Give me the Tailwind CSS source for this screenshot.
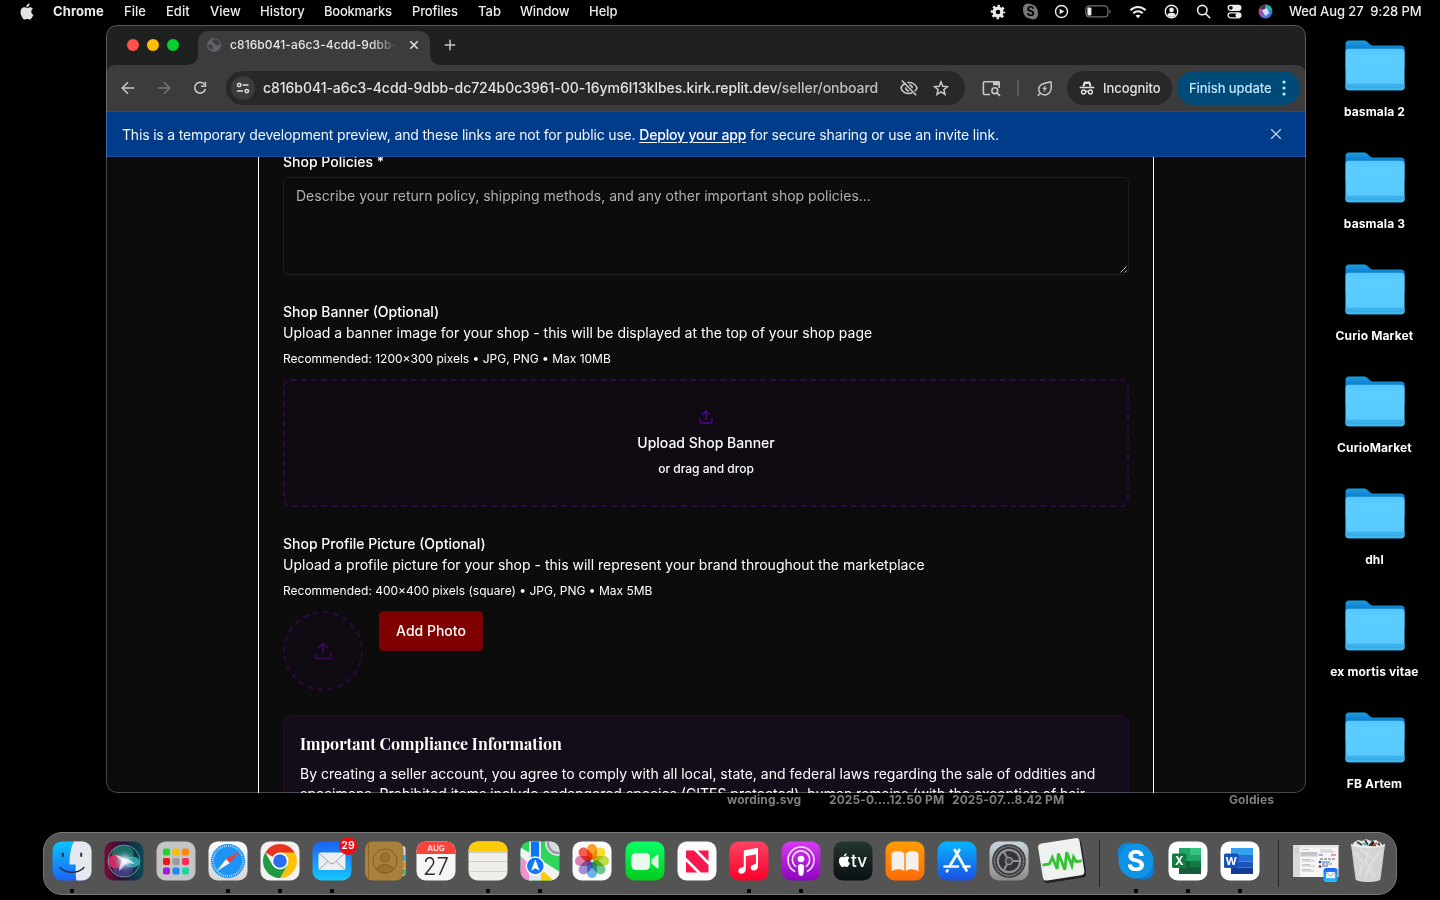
<!DOCTYPE html>
<html lang="en">
<head>
<meta charset="utf-8">
<title>Desktop</title>
<script src="https://cdn.jsdelivr.net/npm/@tailwindcss/browser@4"></script>
</head>
<body class="bg-black">
<div class="relative w-[1440px] h-[900px] overflow-hidden bg-black font-['Inter',sans-serif] text-white">

<!-- Menu bar -->
<header class="flex h-[25px] items-center text-[13px] leading-none font-medium text-[#ececec] whitespace-nowrap pb-[2px]">
  <svg class="ml-[20px] mr-[19px] shrink-0" width="14" height="17" viewBox="0 0 14 17" fill="#e4e4e4"><path d="M9.600 0.300c.1 1-.3 2-.9 2.700-.6.8-1.500 1.300-2.300 1.200-.1-1 .4-2 .9-2.600C7.900.9 8.900.4 9.600.3zM12.900 5.800c-.8.5-1.700 1.400-1.600 2.900 0 1.800 1.200 2.700 2.100 3.100-.4 1.200-1 2.300-1.700 3.300-.6.9-1.200 1.500-2.100 1.500s-1.300-.6-2.400-.6c-1.100 0-1.500.6-2.400.6s-1.600-.8-2.200-1.700C1.100 12.800.5 10.800.5 9c0-3 1.900-4.700 3.800-4.700 1.100 0 2 .7 2.700.7.600 0 1.700-.8 3-.8 1.200 0 2.300.6 2.900 1.600z"/></svg>
  <span class="w-[71px] font-bold tracking-[0.1px]">Chrome</span>
  <span class="w-[42px]">File</span>
  <span class="w-[44px]">Edit</span>
  <span class="w-[50px]">View</span>
  <span class="w-[64px]">History</span>
  <span class="w-[88px] tracking-[-0.25px]">Bookmarks</span>
  <span class="w-[66px] tracking-[-0.15px]">Profiles</span>
  <span class="w-[42px]">Tab</span>
  <span class="w-[69px] tracking-[-0.2px]">Window</span>
  <span class="w-[28px]">Help</span>
  <div class="ml-auto flex items-center mr-[19px]">
    <svg class="mr-[16px]" width="16" height="16" viewBox="0 0 16 16"><circle cx="8" cy="8" r="3.900" fill="none" stroke="#ececec" stroke-width="3.200"/><circle cx="8" cy="8" r="6.100" fill="none" stroke="#ececec" stroke-width="2.400" stroke-dasharray="2.395 2.395" stroke-dashoffset="1.200"/></svg>
    <svg class="mr-[15px]" width="17" height="17" viewBox="0 0 17 17"><rect x="1" y=".5" width="10" height="11" rx="5" fill="#777"/><rect x="6" y="5.500" width="10" height="11" rx="5" fill="#777"/><circle cx="8.500" cy="8.500" r="7.200" fill="#777"/><text x="8.500" y="13" font-size="12.500" font-weight="700" text-anchor="middle" fill="#000">S</text></svg>
    <svg class="mr-[16px]" width="15" height="15" viewBox="0 0 15 15"><circle cx="7.500" cy="7.500" r="6" fill="none" stroke="#ececec" stroke-width="1.400"/><path d="M5.600 4.700v5.600l4.700-2.800z" fill="#ececec"/></svg>
    <svg class="mr-[17px]" width="27" height="13" viewBox="0 0 27 13"><rect x=".9" y=".9" width="22" height="11" rx="3" fill="none" stroke="#8a8a8a"/><rect x="2.400" y="2.400" width="4" height="8" rx="1" fill="#f0f0f0"/><path d="M24.500 4.500v4c1.300-.3 1.300-3.700 0-4z" fill="#8a8a8a"/></svg>
    <svg class="mr-[17px]" width="18" height="14" viewBox="0 0 18 14" fill="none" stroke="#f0f0f0" stroke-width="2"><path d="M1.500 5.200c4.200-4.300 10.800-4.300 15 0M4.300 8.200c2.700-2.700 6.700-2.700 9.400 0"/><path d="M6.500 10.600c1.500-1.300 3.500-1.300 5 0L9 13.200z" fill="#f0f0f0" stroke="none"/></svg>
    <svg class="mr-[17px]" width="15" height="15" viewBox="0 0 15 15"><circle cx="7.500" cy="7.500" r="6.200" fill="none" stroke="#ececec" stroke-width="1.400"/><circle cx="7.500" cy="5.900" r="2.300" fill="#ececec"/><path d="M3.200 11.300c.6-3.300 8-3.300 8.600 0-2 2.300-6.600 2.300-8.600 0z" fill="#ececec"/></svg>
    <svg class="mr-[16px]" width="15" height="15" viewBox="0 0 15 15" fill="none" stroke="#ececec" stroke-width="1.600" stroke-linecap="round"><circle cx="6.300" cy="6.100" r="4.700"/><path d="M9.800 9.700l3.900 4"/></svg>
    <svg class="mr-[16px]" width="15" height="15" viewBox="0 0 15 15"><rect x=".5" y=".7" width="14" height="6.200" rx="3.100" fill="#ececec"/><circle cx="3.800" cy="3.800" r="1.900" fill="#000"/><rect x="1.100" y="8.800" width="12.800" height="5" rx="2.500" fill="none" stroke="#ececec" stroke-width="1.300"/><circle cx="11" cy="11.300" r="2.500" fill="#ececec"/></svg>
    <svg class="mr-[16px]" width="15" height="15" viewBox="0 0 15 15"><defs><linearGradient id="siri" x1="0" y1="0.300" x2="1" y2="0.600"><stop offset="0" stop-color="#e8336f"/><stop offset=".5" stop-color="#5b6fe0"/><stop offset="1" stop-color="#1d7fd6"/></linearGradient></defs><circle cx="7.500" cy="7.500" r="6.900" fill="url(#siri)"/><path d="M7.500.6a6.900 6.900 0 0 1 6.700 6L7 6z" fill="#27b7a0"/><path d="M1.500 4.500C3 2 5 .6 7.500.6L7 6z" fill="#52305f"/><path d="M4 6.500l4.500-2.500 3 5-4 3z" fill="#fff" opacity=".75"/></svg>
    <span class="w-[132px] whitespace-pre tracking-[-0.1px]">Wed Aug 27  9:28 PM</span>
  </div>
</header>

<!-- Desktop folders -->
<svg width="0" height="0" class="absolute"><defs>
  <linearGradient id="fback" x1="0" y1="0" x2="0" y2="1"><stop offset="0" stop-color="#1a9fe0"/><stop offset=".3" stop-color="#0a7fd0"/></linearGradient>
  <linearGradient id="ffront" x1="0" y1="0" x2="0" y2="1"><stop offset="0" stop-color="#56c6fb"/><stop offset=".15" stop-color="#5ccdff"/><stop offset="1" stop-color="#57caff"/></linearGradient>
  <symbol id="folder" viewBox="0 0 60 51"><path d="M.5 4A3.500 3.500 0 0 1 4 .500h14.500c2 0 3 .6 4.200 1.700l2.200 2c1 .9 2 1.300 3.300 1.300H56a3.500 3.500 0 0 1 3.500 3.500v20H.5z" fill="url(#fback)"/><rect x=".5" y="8.800" width="59" height="41.500" rx="3" fill="url(#ffront)"/><path d="M.5 44.500h59v2.800a3 3 0 0 1-3 3h-53a3 3 0 0 1-3-3z" fill="#3cb6ee"/><path d="M.5 44.300h59M1 47h58" stroke="#2da3dc" stroke-width=".7"/></symbol>
</defs></svg>
<aside class="absolute left-[1309px] top-[40px] w-[131px] flex flex-col text-[12px] font-bold leading-[14px] tracking-[0.13px] text-center">
  <div class="h-[112px] flex flex-col items-center gap-[14px]"><svg width="60" height="51"><use href="#folder"/></svg><span>basmala 2</span></div>
  <div class="h-[112px] flex flex-col items-center gap-[14px]"><svg width="60" height="51"><use href="#folder"/></svg><span>basmala 3</span></div>
  <div class="h-[112px] flex flex-col items-center gap-[14px]"><svg width="60" height="51"><use href="#folder"/></svg><span>Curio Market</span></div>
  <div class="h-[112px] flex flex-col items-center gap-[14px]"><svg width="60" height="51"><use href="#folder"/></svg><span>CurioMarket</span></div>
  <div class="h-[112px] flex flex-col items-center gap-[14px]"><svg width="60" height="51"><use href="#folder"/></svg><span>dhl</span></div>
  <div class="h-[112px] flex flex-col items-center gap-[14px]"><svg width="60" height="51"><use href="#folder"/></svg><span>ex mortis vitae</span></div>
  <div class="h-[112px] flex flex-col items-center gap-[14px]"><svg width="60" height="51"><use href="#folder"/></svg><span>FB Artem</span></div>
</aside>

<!-- Labels of desktop files behind the window -->
<div class="absolute left-[727px] top-[792px] flex text-[12px] leading-[16px] font-bold tracking-[0.1px] text-[#7f7f7f] whitespace-nowrap">
  <span class="w-[102px]">wording.svg</span><span class="w-[123px]">2025-0....12.50 PM</span><span class="w-[277px]">2025-07...8.42 PM</span><span>Goldies</span>
</div>

<!-- Browser window -->
<main class="absolute left-[106px] top-[25px] w-[1200px] h-[768px] rounded-[11px] overflow-hidden bg-[#0c0c0c] flex flex-col">
  <!-- Tab strip -->
  <div class="h-[40px] shrink-0 bg-[#1f2120] flex items-end">
    <div class="flex gap-[8px] pl-[21px] pb-[14px] w-[82px]"><i class="size-[12px] rounded-full bg-[#ff5049]"></i><i class="size-[12px] rounded-full bg-[#ffbd05]"></i><i class="size-[12px] rounded-full bg-[#06d12b]"></i></div>
    <svg width="10" height="10" viewBox="0 0 10 10"><path d="M10 0v10H0A10 10 0 0 0 10 0z" fill="#3c3c3c"/></svg>
    <div class="w-[232px] h-[34px] bg-[#3c3c3c] rounded-t-[10px] flex items-center pb-[6px] text-[12px] font-medium text-[#e6e6e6]">
      <svg class="ml-[9px]" width="14" height="14" viewBox="0 0 14 14"><circle cx="7" cy="7" r="7" fill="#5f6368"/><path d="M1.500 6.500l3 .3 1.500 1.700-.7 1.500.3 2.300C3 11.500 1.300 9.500 1.500 6.500zM6.500 1.300l3-.1c2 1 3.200 2.700 3.300 5L10.500 7.500 8.500 7 7.600 5 5.300 4.700z" fill="#3c3c3c"/></svg>
      <span class="ml-[9px] w-[168px] overflow-hidden whitespace-nowrap leading-[16px] tracking-[0.08px] [mask-image:linear-gradient(to_right,black_84%,transparent_100%)]">c816b041-a6c3-4cdd-9dbb-dc72</span>
      <svg class="ml-[11px]" width="10" height="10" viewBox="0 0 10 10" stroke="#dedede" stroke-width="1.600"><path d="M1.300 1.300l7.400 7.400M8.700 1.300L1.300 8.700"/></svg>
    </div>
    <svg width="10" height="10" viewBox="0 0 10 10"><path d="M0 0v10h10A10 10 0 0 1 0 0z" fill="#3c3c3c"/></svg>
    <svg class="ml-[4px] mb-[14px]" width="12" height="12" viewBox="0 0 12 12" stroke="#c7c7c7" stroke-width="1.500"><path d="M6 .8v10.400M.8 6h10.400"/></svg>
  </div>
  <!-- Toolbar -->
  <div class="h-[46px] shrink-0 bg-[#1f2120]"><div class="h-[46px] bg-[#3c3c3c] rounded-t-[9px] flex items-center text-[#e3e3e3] font-medium">
    <svg class="ml-[15px]" width="14" height="14" viewBox="0 0 14 14" fill="none" stroke="#c7c7c7" stroke-width="1.600"><path d="M13.300 7H1.500M7 1.300L1.300 7 7 12.700"/></svg>
    <svg class="ml-[22px]" width="14" height="14" viewBox="0 0 14 14" fill="none" stroke="#757575" stroke-width="1.600"><path d="M.7 7h11.800M7 1.300L12.700 7 7 12.700"/></svg>
    <svg class="ml-[22px]" width="14" height="14" viewBox="0 0 14 14" fill="none" stroke="#c7c7c7" stroke-width="1.600"><path d="M11.500 3.500A5.400 5.400 0 1 0 12.400 8"/><path d="M12.400.8v4.400H8"/></svg>
    <div class="ml-[19px] w-[739px] h-[34px] rounded-full bg-[#282828] flex items-center">
      <div class="ml-[5px] size-[24px] rounded-full bg-[#3c3c3c] flex items-center justify-center"><svg width="14" height="12" viewBox="0 0 14 12" fill="none" stroke="#dedede" stroke-width="1.500"><circle cx="3.200" cy="2.900" r="1.700"/><path d="M6.700 2.900h5.800M1 9.100h6"/><circle cx="10.800" cy="9.100" r="1.700"/></svg></div>
      <span class="ml-[8px] w-[637px] text-[14px] leading-[20px] tracking-[-0.05px] whitespace-nowrap">c816b041-a6c3-4cdd-9dbb-dc724b0c3961-00-16ym6l13klbes.kirk.replit.dev<span class="text-[#c2c2c2]">/seller/onboard</span></span>
      <svg width="18" height="18" viewBox="0 0 18 18" fill="none" stroke="#c7c7c7" stroke-width="1.600"><path d="M5.800 4.200C2.800 5.400 1.200 8 .9 9c1.300 3.500 4.600 5.500 8.100 5.500 1.300 0 2.300-.2 3.300-.7M7.400 3.600c4.300-.6 8.200 1.800 9.700 5.400-.4 1-1.200 2.200-2.300 3.200"/><path d="M9 6a3.200 3.200 0 0 1 3.200 3.200M5.900 8.500A3.200 3.200 0 0 0 9 12.100M1.800 1.500l14.400 14.700"/></svg>
      <svg class="ml-[15px]" width="16" height="16" viewBox="0 0 16 16" fill="none" stroke="#c7c7c7" stroke-width="1.500"><path d="M8 1.800l1.800 4.400 4.700.4-3.600 3.100 1.100 4.600-4-2.500-4 2.500 1.100-4.600L1.500 6.600l4.700-.4z"/></svg>
    </div>
    <svg class="ml-[17px]" width="19" height="17" viewBox="0 0 19 17" fill="none" stroke="#c7c7c7" stroke-width="1.600"><path d="M8 14.500H2.300a.9.900 0 0 1-.9-.9V2.700c0-.5.400-.9.900-.9h14c.5 0 .9.400.9.900V8"/><path d="M11 1.200h6.500v4H11z" fill="#c7c7c7" stroke="none"/><circle cx="12.800" cy="10.700" r="2.900"/><path d="M15 12.900l3 3"/></svg>
    <i class="ml-[16px] w-[2px] h-[16px] bg-[#5c5c5c]"></i>
    <svg class="ml-[17px]" width="17" height="17" viewBox="0 0 17 17" fill="none" stroke="#c7c7c7" stroke-width="1.500"><path d="M14.800 1.800c.9 5 .6 8.800-1.300 11-2.300 2.700-6.600 2.700-9 .5-2.300-2.200-2.300-5.800 0-8 2.300-2.300 6-2.800 10.300-3.500zM4.700 13L1.600 15.800"/><path d="M9.700 4.900L6.200 9h2l-.7 3.200 3.700-4.500H9z" fill="#c7c7c7" stroke="none"/></svg>
    <div class="ml-[14px] w-[105px] h-[34px] rounded-full bg-[#282828] flex items-center text-[13px]">
      <svg class="ml-[12px]" width="16" height="16" viewBox="0 0 16 16"><path d="M5.300 1.500h1L8 2l1.700-.5h1L12.500 6h-9z" fill="#e3e3e3"/><path d="M4.300 6.500L5.500 2.300h5l1.200 4.200" fill="none" stroke="#e3e3e3" stroke-width="1.300"/><path d="M.7 7.500h14.600" stroke="#e3e3e3" stroke-width="1.500"/><path d="M6 4h4v2H6z" fill="#282828"/><g fill="none" stroke="#e3e3e3" stroke-width="1.400"><circle cx="4.600" cy="12" r="2"/><circle cx="11.400" cy="12" r="2"/><path d="M6.600 11.500c.9-.5 1.900-.5 2.800 0"/></g></svg>
      <span class="ml-[8px] pt-[2px] tracking-[-0.05px]">Incognito</span>
    </div>
    <div class="ml-[5px] w-[123px] h-[34px] rounded-full bg-[#004a77] flex items-center text-[13px] text-[#c2e7ff]">
      <span class="ml-[12px] w-[92px] pt-[2px] whitespace-nowrap tracking-[-0.08px]">Finish update</span>
      <svg width="6" height="16" viewBox="0 0 6 16" fill="#c2e7ff"><circle cx="3" cy="2" r="1.600"/><circle cx="3" cy="8" r="1.600"/><circle cx="3" cy="14" r="1.600"/></svg>
    </div>
  </div></div>
  <!-- Preview notice -->
  <div class="h-[46px] shrink-0 bg-[#003c8a] border-t border-t-[#3e4550] border-b border-b-[#1b4f9c] flex items-center pl-[16px] pr-[24px] pt-[2px] text-[14px] leading-[20px] text-[#f1f5fa] whitespace-nowrap">
    <span class="tracking-[-0.175px]">This is a temporary development preview, and these links are not for public use. <u class="font-medium underline-offset-2 text-white">Deploy your app</u> for secure sharing or use an invite link.</span>
    <svg class="ml-auto mb-[2px]" width="12" height="12" viewBox="0 0 12 12" stroke="#c5d3e8" stroke-width="1.300"><path d="M1.200 1.200l9.600 9.600M10.800 1.200l-9.600 9.600"/></svg>
  </div>
  <!-- Page -->
  <div class="flex-1 min-h-0 overflow-hidden">
    <div class="ml-[152px] w-[896px] h-[800px] border-x border-white px-[24px] text-[14px] whitespace-nowrap">
      <div class="-mt-[2px] leading-[14px] font-medium">Shop Policies *</div>
      <div class="mt-[8px] h-[98px] rounded-[6px] border border-[#1f1f1f] px-[12px] py-[8px] leading-[20px] text-[#b0b0b0] flex justify-between">
        <span>Describe your return policy, shipping methods, and any other important shop policies...</span>
        <svg class="self-end -mr-[12px] -mb-[8px]" width="10" height="10" viewBox="0 0 10 10" stroke="#b5b5b5" stroke-width="1"><path d="M2.500 8.500l6-6M6.500 8.500l2-2"/></svg>
      </div>
      <div class="mt-[30px] leading-[14px] font-medium">Shop Banner (Optional)</div>
      <p class="mt-[4px] leading-[20px]">Upload a banner image for your shop - this will be displayed at the top of your shop page</p>
      <p class="mt-[8px] text-[12px] leading-[16px]">Recommended: 1200×300 pixels • JPG, PNG • Max 10MB</p>
      <div class="mt-[12px] h-[128px] rounded-[8px] border-2 border-dashed border-[#2b0a3d] bg-[#100a13] flex flex-col items-center">
        <svg class="mt-[28px]" width="16" height="16" viewBox="0 0 24 24" fill="none" stroke="#580592" stroke-width="2" stroke-linecap="round" stroke-linejoin="round"><path d="M21 15v4a2 2 0 0 1-2 2H5a2 2 0 0 1-2-2v-4M17 8l-5-5-5 5M12 3v12"/></svg>
        <span class="mt-[8px] leading-[20px] font-medium">Upload Shop Banner</span>
        <span class="mt-[8px] text-[12px] leading-[16px] font-medium">or drag and drop</span>
      </div>
      <div class="mt-[30px] leading-[14px] font-medium">Shop Profile Picture (Optional)</div>
      <p class="mt-[4px] leading-[20px]">Upload a profile picture for your shop - this will represent your brand throughout the marketplace</p>
      <p class="mt-[8px] text-[12px] leading-[16px]">Recommended: 400×400 pixels (square) • JPG, PNG • Max 5MB</p>
      <div class="mt-[12px] flex items-start gap-[16px]">
        <div class="size-[80px] rounded-full border-2 border-dashed border-[#2b0a3d] bg-[#100a13] flex items-center justify-center"><svg width="20" height="20" viewBox="0 0 24 24" fill="none" stroke="#3b0a5e" stroke-width="2" stroke-linecap="round" stroke-linejoin="round"><path d="M21 15v4a2 2 0 0 1-2 2H5a2 2 0 0 1-2-2v-4M17 8l-5-5-5 5M12 3v12"/></svg></div>
        <div class="w-[104px] h-[40px] rounded-[4px] bg-[#800000] border border-[#740216] flex items-center justify-center font-medium leading-[20px]">Add Photo</div>
      </div>
      <div class="mt-[24px] h-[160px] rounded-[8px] border border-[#260a36] bg-[#140c18] px-[16px] pt-[16px]">
        <h4 class="h-[24px] leading-[24px] text-[16px] font-bold font-['Playfair_Display','Liberation_Serif',serif]">Important Compliance Information</h4>
        <p class="mt-[8px] leading-[20px]">By creating a seller account, you agree to comply with all local, state, and federal laws regarding the sale of oddities and<br>specimens. Prohibited items include endangered species (CITES protected), human remains (with the exception of hair,</p>
      </div>
    </div>
  </div>
  <div class="absolute inset-0 rounded-[11px] border border-white/25"></div>
</main>

<!-- Dock -->
<svg width="0" height="0" class="absolute"><defs>
  <linearGradient id="gBlue" x1="0" y1="0" x2="0" y2="1"><stop offset="0" stop-color="#0cc4fe"/><stop offset="1" stop-color="#1b63f5"/></linearGradient>
  <linearGradient id="gMail" x1="0" y1="0" x2="0" y2="1"><stop offset="0" stop-color="#1a62f3"/><stop offset="1" stop-color="#18c7fd"/></linearGradient>
  <linearGradient id="gGrey" x1="0" y1="0" x2="0" y2="1"><stop offset="0" stop-color="#fff"/><stop offset="1" stop-color="#d5d5d8"/></linearGradient>
  <linearGradient id="gSiri" x1="0" y1="0" x2="1" y2="0"><stop offset="0" stop-color="#7a0b35"/><stop offset=".45" stop-color="#2a1238"/><stop offset="1" stop-color="#064c57"/></linearGradient>
  <radialGradient id="gOrb"><stop offset="0" stop-color="#fff"/><stop offset=".3" stop-color="#c0d9ee" stop-opacity=".9"/><stop offset="1" stop-color="#3b7a9a" stop-opacity="0"/></radialGradient>
  <linearGradient id="gGreen" x1="0" y1="0" x2="0" y2="1"><stop offset="0" stop-color="#0aff68"/><stop offset="1" stop-color="#04cb1b"/></linearGradient>
  <linearGradient id="gMusic" x1="0" y1="0" x2="0" y2="1"><stop offset="0" stop-color="#fb4463"/><stop offset="1" stop-color="#fa0029"/></linearGradient>
  <linearGradient id="gPod" x1="0" y1="0" x2="0" y2="1"><stop offset="0" stop-color="#d63af2"/><stop offset="1" stop-color="#8c05be"/></linearGradient>
  <linearGradient id="gTv" x1="0" y1="0" x2="0" y2="1"><stop offset="0" stop-color="#243631"/><stop offset="1" stop-color="#0b1013"/></linearGradient>
  <linearGradient id="gBook" x1="0" y1="0" x2="0" y2="1"><stop offset="0" stop-color="#ff9e05"/><stop offset="1" stop-color="#ff6a05"/></linearGradient>
  <linearGradient id="gStore" x1="0" y1="0" x2="0" y2="1"><stop offset="0" stop-color="#08b4fd"/><stop offset="1" stop-color="#1a51e4"/></linearGradient>
  <linearGradient id="gSet" x1="0" y1="0" x2="0" y2="1"><stop offset="0" stop-color="#c9d5dc"/><stop offset="1" stop-color="#8d8b88"/></linearGradient>
</defs></svg>
<nav class="absolute left-[43px] top-[832px] w-[1354px] h-[63px] rounded-[19px] bg-[#545454] border border-[#7a7a7a] pl-[2px] pt-[8px] flex items-start">
  <!-- Finder -->
  <div class="w-[52px] shrink-0 flex flex-col items-center gap-[8px]"><svg width="40" height="40" viewBox="0 0 40 40"><rect x=".5" y=".5" width="39" height="39" rx="9" fill="url(#gBlue)"/><path d="M22 .5h8.500a9 9 0 0 1 9 9v21a9 9 0 0 1-9 9H24.500c-.8-4-1-8-.8-16H17.500C17.500 14 19 6 22 .5z" fill="#e6e8ef"/><path d="M8 26.500c6 6.500 18 6.500 24 0" fill="none" stroke="#222c3c" stroke-width="1.400" stroke-linecap="round"/><path d="M10.800 12.500v2.500M29.200 12.500v2.500" stroke="#222c3c" stroke-width="1.900" stroke-linecap="round"/></svg><i class="size-[4px] rounded-[1px] bg-black"></i></div>
  <!-- Siri -->
  <div class="w-[52px] shrink-0 flex justify-center"><svg width="40" height="40" viewBox="0 0 40 40"><rect x=".5" y=".5" width="39" height="39" rx="9" fill="url(#gSiri)"/><circle cx="20" cy="20" r="16.500" fill="#103848" opacity=".4"/><ellipse cx="19" cy="12.500" rx="11" ry="8" fill="#17a07c" opacity=".6"/><ellipse cx="19" cy="28" rx="10" ry="7" fill="#694cb0" opacity=".55"/><ellipse cx="12" cy="20.500" rx="8" ry="7" fill="#ee2a66" opacity=".85"/><ellipse cx="28" cy="21" rx="7.500" ry="5.500" fill="#35c3c0" opacity=".8"/><circle cx="20.500" cy="20" r="11" fill="url(#gOrb)"/><path d="M11 14c5 1 8 2 10 4 4 0 7 2 10 5-5-1-8-1-10 0-2 3-3 5-6 7 0-5 2-8 3-10-3-2-5-4-7-6z" fill="#fff" opacity=".65"/><circle cx="20" cy="20" r="16" fill="none" stroke="#86bfc1" stroke-width="1" opacity=".7"/></svg></div>
  <!-- Launchpad -->
  <div class="w-[52px] shrink-0 flex justify-center"><svg width="40" height="40" viewBox="0 0 40 40"><rect x=".5" y=".5" width="39" height="39" rx="9" fill="#c3c4c6"/><g><rect x="7" y="7.500" width="7" height="7" rx="1.800" fill="#1bd629"/><rect x="16.500" y="7.500" width="7" height="7" rx="1.800" fill="#fbbd05"/><rect x="26" y="7.500" width="7" height="7" rx="1.800" fill="#fb8a07"/><rect x="7" y="17" width="7" height="7" rx="1.800" fill="#ee1414"/><rect x="16.500" y="17" width="7" height="7" rx="1.800" fill="#98999c"/><rect x="26" y="17" width="7" height="7" rx="1.800" fill="#fb2c5b"/><rect x="7" y="26.500" width="7" height="7" rx="1.800" fill="#a31bdc"/><rect x="16.500" y="26.500" width="7" height="7" rx="1.800" fill="#1a8af5"/><rect x="26" y="26.500" width="7" height="7" rx="1.800" fill="#1ed6a4"/></g></svg></div>
  <!-- Safari -->
  <div class="w-[52px] shrink-0 flex flex-col items-center gap-[8px]"><svg width="40" height="40" viewBox="0 0 40 40"><rect x=".5" y=".5" width="39" height="39" rx="9" fill="url(#gGrey)"/><circle cx="20" cy="20" r="17" fill="#1d93f3"/><circle cx="20" cy="20" r="15" fill="none" stroke="#d5ecff" stroke-width="2" stroke-dasharray=".7 1.250"/><path d="M31.500 10.500L21.800 22 18 18z" fill="#fb3b30"/><path d="M18 18l3.800 4L8.500 30.500z" fill="#f6f6f6"/></svg><i class="size-[4px] rounded-[1px] bg-black"></i></div>
  <!-- Chrome -->
  <div class="w-[52px] shrink-0 flex flex-col items-center gap-[8px]"><svg width="40" height="40" viewBox="0 0 40 40"><rect x=".5" y=".5" width="39" height="39" rx="9" fill="#f2f2f2"/><path d="M20 20L5.300 11.500A17 17 0 0 1 34.700 11.500z" fill="#e8341f"/><path d="M20 11.500h14.700A17 17 0 0 1 20 37l7.400-12.800z" fill="#fcc108"/><path d="M5.300 11.500L12.600 24.200 27.400 24.200 20 37A17 17 0 0 1 5.300 11.500z" fill="#1f9b42"/><circle cx="20" cy="20" r="8.500" fill="#fff"/><circle cx="20" cy="20" r="6.800" fill="#2a6ff0"/></svg><i class="size-[4px] rounded-[1px] bg-black"></i></div>
  <!-- Mail -->
  <div class="relative w-[52px] shrink-0 flex flex-col items-center gap-[8px]"><svg width="40" height="40" viewBox="0 0 40 40"><rect x=".5" y=".5" width="39" height="39" rx="9" fill="url(#gMail)"/><rect x="6.500" y="11.500" width="27" height="17.500" rx="2" fill="#eceef0"/><path d="M7.200 12.300L18 22c1.300 1.100 2.700 1.100 4 0l10.800-9.700M7.500 28.300l8.500-8M32.500 28.300l-8.500-8" fill="none" stroke="#9da5ad" stroke-width="1"/></svg><i class="size-[4px] rounded-[1px] bg-black"></i><b class="absolute left-[33px] -top-[4px] size-[18px] rounded-full bg-[#f20d12] text-[10.5px] leading-[18px] text-center font-semibold">29</b></div>
  <!-- Contacts -->
  <div class="w-[52px] shrink-0 flex justify-center pl-[2px]"><svg width="41" height="40" viewBox="0 0 41 40"><rect x="31" y="5" width="9.500" height="30" rx="3" fill="#d9dadb"/><path d="M35 14h5.500v6H35z" fill="#29a9ec"/><path d="M35 21h5.500v6H35z" fill="#f08a1d"/><path d="M35 28h5.500v3a3 3 0 0 1-3 3H35z" fill="#2bc653"/><rect x="0" y=".5" width="38.500" height="39" rx="8" fill="#a9803c"/><path d="M3.500 1v38" stroke="#8b6629" stroke-width="1"/><g fill="#9a7130" stroke="#7f5c22" stroke-width="1"><circle cx="20" cy="20" r="12" fill="none"/><circle cx="20" cy="16.500" r="4.500"/><path d="M11.500 28.500c2-6.500 15-6.500 17 0-4.500 4.700-12.500 4.700-17 0z"/></g></svg></div>
  <!-- Calendar -->
  <div class="w-[52px] shrink-0 flex justify-center"><svg width="40" height="40" viewBox="0 0 40 40"><rect x=".5" y=".5" width="39" height="39" rx="9" fill="#f7f6f5"/><path d="M.5 13V9.500a9 9 0 0 1 9-9h21a9 9 0 0 1 9 9V13z" fill="#f8443d"/><text x="20" y="10.200" font-size="8" font-weight="600" text-anchor="middle" fill="#ffe9e8">AUG</text><text x="20" y="33.500" font-size="24" font-weight="300" text-anchor="middle" fill="#2a2a2a" textLength="26" lengthAdjust="spacingAndGlyphs">27</text></svg></div>
  <!-- Notes -->
  <div class="w-[52px] shrink-0 flex flex-col items-center gap-[8px]"><svg width="40" height="40" viewBox="0 0 40 40"><rect x=".5" y=".5" width="39" height="39" rx="9" fill="#f0eeeb"/><path d="M.5 10.500v-1a9 9 0 0 1 9-9h21a9 9 0 0 1 9 9v1z" fill="#fdcc08"/><path d="M1 11.300h38" stroke="#8f8d87" stroke-width=".8" stroke-dasharray="1 .6"/><path d="M1 20.500h38M1 30.500h38" stroke="#cfcdca" stroke-width=".9"/></svg><i class="size-[4px] rounded-[1px] bg-black"></i></div>
  <!-- Maps -->
  <div class="w-[52px] shrink-0 flex flex-col items-center gap-[8px]"><svg width="40" height="40" viewBox="0 0 40 40"><clipPath id="mp"><rect x=".5" y=".5" width="39" height="39" rx="9"/></clipPath><g clip-path="url(#mp)"><rect width="40" height="40" fill="#2fd45b"/><path d="M0 16l11 7v17H0z" fill="#f08fd4"/><path d="M0 6l40 25v9H31L0 15z" fill="#f1f2f4"/><path d="M20 27l14 13H20z" fill="#fccb10"/><path d="M9 0h12v40H9z" fill="#e3e5ea"/><path d="M11 0h8v20h-8z" fill="#0d76f5"/><circle cx="38" cy="2" r="13" fill="#d8dadd"/><circle cx="38" cy="2" r="10" fill="none" stroke="#96989c" stroke-width="2"/></g><circle cx="15.300" cy="25" r="9.700" fill="#fff"/><circle cx="15.300" cy="25" r="8.300" fill="#1477f6"/><path d="M15.300 18.500l4.300 11.300-4.300-2.600-4.300 2.600z" fill="#fff"/></svg><i class="size-[4px] rounded-[1px] bg-black"></i></div>
  <!-- Photos -->
  <div class="w-[52px] shrink-0 flex justify-center"><svg width="40" height="40" viewBox="0 0 40 40"><rect x=".5" y=".5" width="39" height="39" rx="9" fill="#fbfbfb"/><g class="isolate"><g class="*:mix-blend-multiply"><rect x="15" y="3" width="10" height="16" rx="5" fill="#fba02a"/><rect x="15" y="3" width="10" height="16" rx="5" fill="#f6dc2c" transform="rotate(45 20 20)"/><rect x="15" y="3" width="10" height="16" rx="5" fill="#bfdc45" transform="rotate(90 20 20)"/><rect x="15" y="3" width="10" height="16" rx="5" fill="#6cc98a" transform="rotate(135 20 20)"/><rect x="15" y="3" width="10" height="16" rx="5" fill="#6ab4ea" transform="rotate(180 20 20)"/><rect x="15" y="3" width="10" height="16" rx="5" fill="#9f8fd6" transform="rotate(225 20 20)"/><rect x="15" y="3" width="10" height="16" rx="5" fill="#dd80b2" transform="rotate(270 20 20)"/><rect x="15" y="3" width="10" height="16" rx="5" fill="#f55a4a" transform="rotate(315 20 20)"/></g></g></svg></div>
  <!-- FaceTime -->
  <div class="w-[53px] shrink-0 flex justify-center pl-[1px]"><svg width="40" height="40" viewBox="0 0 40 40"><rect x=".5" y=".5" width="39" height="39" rx="9" fill="url(#gGreen)"/><rect x="6.500" y="12" width="18.500" height="17" rx="4.500" fill="#e9f9ec"/><path d="M26.500 18.500l6-5c.5-.4 1-.2 1 .5v13c0 .7-.5.9-1 .5l-6-5z" fill="#dcf5e0"/></svg></div>
  <!-- News -->
  <div class="w-[52px] shrink-0 flex justify-center"><svg width="40" height="40" viewBox="0 0 40 40"><rect x=".5" y=".5" width="39" height="39" rx="9" fill="#fcfcfc"/><path d="M9 9.500h8L31.500 24v7.500H24L9 16.500z" fill="#f8164c"/><path d="M21 9.500h10.500V20z" fill="#f8164c"/><path d="M9 20.500V31.500h11z" fill="#f8164c"/></svg></div>
  <!-- Music -->
  <div class="w-[52px] shrink-0 flex flex-col items-center gap-[8px]"><svg width="40" height="40" viewBox="0 0 40 40"><rect x=".5" y=".5" width="39" height="39" rx="9" fill="url(#gMusic)"/><path d="M14.800 10.300c0-.6.400-1 1-1.100l12-2.300c.7-.1 1.200.2 1.200 1v17.500c0 2.300-1.700 3.800-4 4.100-2 .2-3.300-1-3.300-2.700 0-1.800 1.300-2.900 3.200-3.300 1.500-.3 2.100-.7 2.100-2V13.200l-10.200 2v13c0 2.600-1.600 4.200-4 4.500-2 .2-3.500-.9-3.500-2.700s1.300-3 3.300-3.400c1.500-.3 2.200-.7 2.200-2.100z" fill="#fff"/></svg><i class="size-[4px] rounded-[1px] bg-black"></i></div>
  <!-- Podcasts -->
  <div class="w-[52px] shrink-0 flex flex-col items-center gap-[8px]"><svg width="40" height="40" viewBox="0 0 40 40"><rect x=".5" y=".5" width="39" height="39" rx="9" fill="url(#gPod)"/><g fill="none" stroke="#f5e4fb" stroke-width="1.600" stroke-linecap="round"><path d="M13.500 30.300a13 13 0 1 1 13 0"/><path d="M14.500 25.300a8.700 8.700 0 1 1 11 0"/></g><circle cx="20" cy="18" r="3.300" fill="#fff"/><path d="M16.800 25.500c0-3.500 6.400-3.500 6.400 0l-.8 7.500c-.5 2.500-4.300 2.500-4.800 0z" fill="#fff"/></svg><i class="size-[4px] rounded-[1px] bg-black"></i></div>
  <!-- TV -->
  <div class="w-[52px] shrink-0 flex justify-center"><svg width="40" height="40" viewBox="0 0 40 40"><rect x=".5" y=".5" width="39" height="39" rx="9" fill="url(#gTv)"/><path transform="translate(5.500 12) scale(.85)" d="M9.600.3c.1 1-.3 2-.9 2.700-.6.800-1.500 1.300-2.300 1.200-.1-1 .4-2 .9-2.600C7.900.9 8.900.4 9.600.3zM12.900 5.800c-.8.500-1.700 1.400-1.600 2.900 0 1.800 1.200 2.700 2.100 3.100-.4 1.200-1 2.300-1.700 3.300-.6.900-1.200 1.500-2.100 1.500s-1.300-.6-2.400-.6-1.500.6-2.400.6-1.600-.8-2.200-1.700C1.100 12.800.5 10.800.5 9c0-3 1.900-4.700 3.800-4.700 1.100 0 2 .7 2.700.7s1.700-.8 3-.8c1.200 0 2.300.6 2.900 1.600z" fill="#fff"/><text x="18" y="26" font-size="17" font-weight="500" fill="#fff" textLength="16" lengthAdjust="spacingAndGlyphs">tv</text></svg></div>
  <!-- Books -->
  <div class="w-[52px] shrink-0 flex justify-center"><svg width="40" height="40" viewBox="0 0 40 40"><rect x=".5" y=".5" width="39" height="39" rx="9" fill="url(#gBook)"/><path d="M6.500 12.500c3.500-3.500 10-3 12.800 0V30c-3.500-2.500-9-2.500-12.800.3zM33.500 12.500c-3.500-3.500-10-3-12.800 0V30c3.500-2.500 9-2.500 12.800.3z" fill="#f6f0ea"/></svg></div>
  <!-- App Store -->
  <div class="w-[52px] shrink-0 flex justify-center"><svg width="40" height="40" viewBox="0 0 40 40"><rect x=".5" y=".5" width="39" height="39" rx="9" fill="url(#gStore)"/><g stroke="#f4f8fd" stroke-width="2.700" stroke-linecap="round"><path d="M22.300 9L12.500 25.500M17.800 9l11.700 20.500M7.500 25.500h13.500M26.500 25.500h6M10.500 29.300l-.6 1"/></g></svg></div>
  <!-- System Settings -->
  <div class="w-[52px] shrink-0 flex justify-center"><svg width="40" height="40" viewBox="0 0 40 40"><rect x=".5" y=".5" width="39" height="39" rx="9" fill="url(#gSet)"/><circle cx="20" cy="20" r="16.800" fill="#333436"/><circle cx="20" cy="20" r="14.600" fill="none" stroke="#85878a" stroke-width="1.800" stroke-dasharray="1 .5"/><circle cx="20" cy="20" r="11.200" fill="none" stroke="#8f9193" stroke-width="2.200"/><g stroke="#909294" stroke-width="2"><path d="M20 20h11M20 20l-5.500-9.500M20 20l-5.500 9.500"/></g><circle cx="20" cy="20" r="3.500" fill="#45474a" stroke="#8f9193" stroke-width="1.500"/></svg></div>
  <!-- Activity monitor -->
  <div class="w-[52px] shrink-0 flex justify-center pl-[1px]"><svg width="48" height="46" viewBox="0 0 48 46" class="-mt-[3px]"><g transform="rotate(-9 24 23)"><rect x="3" y="4.500" width="43" height="38" rx="4" fill="#222"/><rect x="2.500" y="2.500" width="42" height="37.500" rx="4" fill="#eff1f1"/><path d="M4 24h7l4-6 3 12 3.500-15 4 17 4.500-17 3 14 3-8 2 5h5.500" fill="none" stroke="#35c236" stroke-width="2.900"/></g></svg></div>
  <i class="w-[23px] shrink-0 flex justify-center"><i class="ml-[2px] mt-[-1px] w-[1px] h-[47px] bg-[#262626]"></i></i>
  <!-- Skype -->
  <div class="w-[52px] shrink-0 flex flex-col items-center gap-[8px]"><svg width="40" height="40" viewBox="0 0 40 40"><circle cx="12" cy="12" r="10.500" fill="#0a86da"/><circle cx="28" cy="28" r="10.500" fill="#0a7bd6"/><circle cx="20" cy="20" r="17.500" fill="#0e93e6"/><text x="20" y="30" font-size="28" font-weight="700" text-anchor="middle" fill="#fff">S</text></svg><i class="size-[4px] rounded-[1px] bg-black"></i></div>
  <!-- Excel -->
  <div class="w-[52px] shrink-0 flex flex-col items-center gap-[8px]"><svg width="40" height="40" viewBox="0 0 40 40"><rect x=".5" y=".5" width="39" height="39" rx="9" fill="#fff"/><path d="M11 7h11v13H11z" fill="#20a464"/><path d="M22 7h11v7H22z" fill="#32c480"/><path d="M22 14h11v6H22z" fill="#20a464"/><path d="M11 20h11v13H11z" fill="#185c37"/><path d="M22 20h11v6H22z" fill="#107c41"/><path d="M22 26h11v7H22z" fill="#185c37"/><rect x="4" y="12.500" width="14.500" height="14.500" rx="1.500" fill="#107c41"/><text x="11.300" y="24" font-size="11.500" font-weight="700" text-anchor="middle" fill="#fff">X</text></svg><i class="size-[4px] rounded-[1px] bg-black"></i></div>
  <!-- Word -->
  <div class="w-[52px] shrink-0 flex flex-col items-center gap-[8px]"><svg width="40" height="40" viewBox="0 0 40 40"><rect x=".5" y=".5" width="39" height="39" rx="9" fill="#fff"/><path d="M11 7h22v7H11z" fill="#35a1ee"/><path d="M11 14h22v6.500H11z" fill="#2470d4"/><path d="M11 20.500h22v6H11z" fill="#1b55b8"/><path d="M11 26.500h22V33H11z" fill="#143b96"/><rect x="4" y="12.500" width="14.500" height="14.500" rx="1.500" fill="#1a52bd"/><text x="11.300" y="24" font-size="11" font-weight="700" text-anchor="middle" fill="#fff">W</text></svg><i class="size-[4px] rounded-[1px] bg-black"></i></div>
  <i class="w-[24px] shrink-0 flex justify-center"><i class="mt-[-1px] w-[1px] h-[47px] bg-[#262626]"></i></i>
  <!-- Minimised window -->
  <div class="w-[52px] shrink-0 flex justify-center"><svg width="46" height="42" viewBox="0 0 46 42"><rect x="0" y="4" width="45.500" height="32" fill="#f6f6f6"/><path d="M0 4h7v32H0z" fill="#dadada"/><path d="M7 4h38.500v2.500H7z" fill="#e6e4e4"/><path d="M7.500 11h17v4.500h-17z" fill="#c9c9c9"/><g stroke="#b5b5b5" stroke-width=".8"><path d="M9 8.500h7M9 12.500h13M9 18.500h9M9 20h13M9 23.500h8M9 25h13M9 28.500h9M9 30h12M27 9h12M27 11h15M1.500 8h3M1.500 11h4"/></g><path d="M26 14h4M29 21h8M29 25h6" stroke="#3571d8" stroke-width="1.200"/><path d="M27 18h15M29 23h10" stroke="#555" stroke-width=".9" stroke-dasharray="3 1"/><path d="M38 14h5" stroke="#dd5a64" stroke-width="1.200"/><circle cx="27" cy="21" r="1.300" fill="#2a3a8c"/><circle cx="27" cy="25.500" r="1.300" fill="#6c2a62"/><rect x="30.500" y="27" width="14" height="14" rx="3" fill="url(#gMail)"/><rect x="33" y="31" width="9.200" height="6.200" rx=".8" fill="#f1f3f6"/><path d="M33 31.500l4.600 3.500 4.600-3.500" fill="none" stroke="#8794a3" stroke-width=".7"/></svg></div>
  <!-- Trash -->
  <div class="w-[52px] shrink-0 flex justify-center"><svg width="38" height="46" viewBox="0 0 38 46" class="-mt-[3px]"><path d="M4 5l5-3 4 1 4-2 5 2 5-1 6 4v5H4z" fill="#e3e3e3"/><path d="M8 4l5 3M16 2l3 5M24 3l-3 4 6 1M29 5l2 3" stroke="#3a3836" stroke-width="1.800"/><path d="M14 5l3 2" stroke="#38b6c8" stroke-width="2"/><path d="M24 7l4-2" stroke="#c5602f" stroke-width="1.600"/><path d="M2 6.500c4 3.500 30 3.500 34 0l-4.500 34.500c-.5 4-24.500 4-25 0z" fill="#d3d3d3"/><path d="M6 14l8 10-4 14M20 11l-3 12 9 16M32 13l-8 10-8 15M11 11l14 11" fill="none" stroke="#e2e2e2" stroke-width="2.200" opacity=".7"/><path d="M2 6.500c4 3.500 30 3.500 34 0" fill="none" stroke="#f2f2f2" stroke-width="1.200"/></svg></div>
</nav>
</div>
</body>
</html>
